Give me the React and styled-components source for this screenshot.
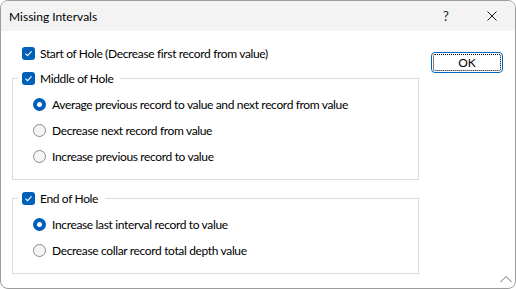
import React from "react";
import styled, { createGlobalStyle } from "styled-components";

const Global = createGlobalStyle`
  html, body { margin: 0; padding: 0; background: #ffffff; }
  body { font-family: Lato, "Segoe UI", sans-serif; font-size: 12px; letter-spacing: -0.35px; color: #000; }
  * { box-sizing: border-box; }
`;

const Window = styled.div`
  position: relative;
  width: 516px;
  height: 289px;
  border: 1px solid #9c9c9c;
  border-radius: 8px;
  overflow: hidden;
  background: #ffffff;
  display: flex;
  flex-direction: column;
`;

const TitleBar = styled.div`
  height: 30px;
  background: #f3f3f3;
  display: flex;
  align-items: center;
  padding-left: 8px;
  flex-shrink: 0;
`;

const Title = styled.div`
  flex: 1;
  font-size: 12px;
  letter-spacing: 0;
  color: #000;
`;

const TitleButton = styled.div`
  width: ${(p) => p.$w}px;
  height: 30px;
  display: flex;
  align-items: center;
  justify-content: center;
  color: #1a1a1a;
  font-size: 13px;
  letter-spacing: 0;
`;

const Body = styled.div`
  display: flex;
  padding: 9px 0 0 11px;
`;

const LeftColumn = styled.div`
  width: 407px;
  display: flex;
  flex-direction: column;
`;

const RightColumn = styled.div`
  padding-left: 12px;
  padding-top: 12px;
`;

const Row = styled.label`
  height: 26px;
  display: flex;
  align-items: center;
  gap: ${(p) => p.$gap || 5}px;
  padding-left: ${(p) => p.$indent || 0}px;
  white-space: nowrap;
`;

const Group = styled.fieldset`
  margin: ${(p) => p.$top || 0}px 0 0 0;
  padding: 1px 0 10px 0;
  border: 1px solid #dcdcdc;
  min-inline-size: 0;
`;

const Legend = styled.legend`
  margin-left: 5px;
  padding: 0 7px 0 4px;
  height: 24px;
  display: flex;
  align-items: center;
  gap: 5px;
  white-space: nowrap;
`;

const CheckBox = styled.span`
  width: 13px;
  height: 13px;
  border-radius: 3px;
  background: #005fb8;
  display: inline-flex;
  align-items: center;
  justify-content: center;
  flex-shrink: 0;
`;

const Radio = styled.span`
  width: 13px;
  height: 13px;
  border-radius: 50%;
  flex-shrink: 0;
  box-sizing: border-box;
  ${(p) =>
    p.$on
      ? `background: #ffffff; border: 4px solid #005fb8;`
      : `background: #f5f5f5; border: 1px solid #8a8a8a;`}
`;

const OkButton = styled.button`
  width: 72px;
  height: 21px;
  border: 1px solid #0067c0;
  border-radius: 4px;
  background: #ffffff;
  padding: 1px;
  font: inherit;
  font-size: 12px;
  letter-spacing: 0;
  color: #000;
  display: flex;
`;

const FocusRing = styled.span`
  flex: 1;
  border: 1px dotted #000;
  border-radius: 2px;
  display: flex;
  align-items: center;
  justify-content: center;
`;

const Grip = styled.svg`
  position: absolute;
  right: 3px;
  bottom: 5px;
`;

const Check = () => (
  <CheckBox>
    <svg width="9" height="9" viewBox="0 0 9 9">
      <path d="M1.5 4.7 L3.5 6.6 L7.6 2.3" fill="none" stroke="#fff" strokeWidth="1.1" />
    </svg>
  </CheckBox>
);

export default function App() {
  return (
    <>
      <Global />
      <Window>
        <TitleBar>
          <Title>Missing Intervals</Title>
          <TitleButton $w={46}>?</TitleButton>
          <TitleButton $w={46}>
            <svg width="10" height="10" viewBox="0 0 10 10">
              <path d="M0.5 0.5 L9.5 9.5 M9.5 0.5 L0.5 9.5" stroke="#1a1a1a" strokeWidth="1" />
            </svg>
          </TitleButton>
        </TitleBar>
        <Body>
          <LeftColumn>
            <Row $indent={10}>
              <Check />
              Start of Hole (Decrease first record from value)
            </Row>
            <Group>
              <Legend>
                <Check />
                Middle of Hole
              </Legend>
              <Row $indent={20} $gap={6}>
                <Radio $on />
                Average previous record to value and next record from value
              </Row>
              <Row $indent={20} $gap={6}>
                <Radio />
                Decrease next record from value
              </Row>
              <Row $indent={20} $gap={6}>
                <Radio />
                Increase previous record to value
              </Row>
            </Group>
            <Group $top={6}>
              <Legend>
                <Check />
                End of Hole
              </Legend>
              <Row $indent={20} $gap={6}>
                <Radio $on />
                Increase last interval record to value
              </Row>
              <Row $indent={20} $gap={6}>
                <Radio />
                Decrease collar record total depth value
              </Row>
            </Group>
          </LeftColumn>
          <RightColumn>
            <OkButton>
              <FocusRing>OK</FocusRing>
            </OkButton>
          </RightColumn>
        </Body>
        <Grip width="12" height="8" viewBox="0 0 12 8">
          <path d="M0.5 7 L6 1.5 L11.5 7" fill="none" stroke="#6a6a6a" strokeWidth="1" />
        </Grip>
      </Window>
    </>
  );
}
